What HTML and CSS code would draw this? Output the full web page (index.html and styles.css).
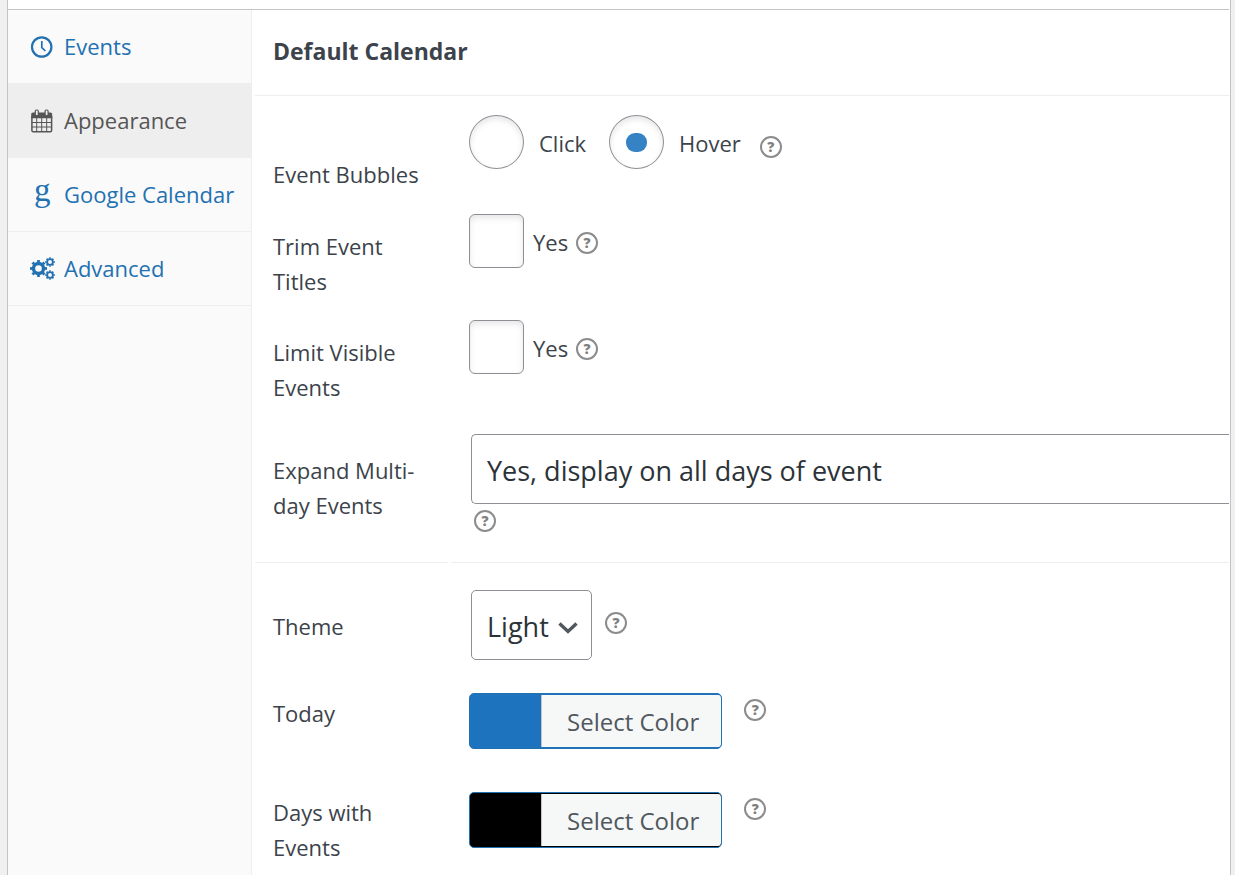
FILE: index.html
```
<!DOCTYPE html>
<html lang="en">
<head>
<meta charset="utf-8">
<title>Default Calendar</title>
<link rel="stylesheet" href="styles.css">
</head>
<body>
<div class="panel">
  <div class="panel-body">
    <nav class="tabs">
      <a class="tab" href="#events">
        <svg class="tab-icon" viewBox="0 0 28 28" aria-hidden="true"><circle cx="11.700" cy="14" r="9.700" fill="none" stroke="currentColor" stroke-width="2.200"/><path d="M11.800 8v6.600l3.600 3.400" fill="none" stroke="currentColor" stroke-width="1.700"/></svg>
        <span>Events</span>
      </a>
      <a class="tab tab-active" href="#appearance">
        <svg class="tab-icon" viewBox="0 0 28 28" aria-hidden="true"><path d="M3 5.500h17.500q1.700 0 1.700 1.500v4.300H1.200V7q0-1.500 1.800-1.500z" fill="currentColor"/><path d="M1.900 9v14.400q0 1.400 1.400 1.400h16.900q1.400 0 1.400-1.400V9" fill="none" stroke="currentColor" stroke-width="1.500"/><path d="M6.700 10v14.500M11.700 10v14.500M16.700 10v14.500M2 15.500h19.500M2 20h19.500" fill="none" stroke="currentColor" stroke-width="1"/><rect x="5.300" y="3" width="3" height="5.600" rx="1.200" fill="#eee" stroke="currentColor" stroke-width="1.200"/><rect x="15.100" y="3" width="3" height="5.600" rx="1.200" fill="#eee" stroke="currentColor" stroke-width="1.200"/></svg>
        <span>Appearance</span>
      </a>
      <a class="tab" href="#google">
        <span class="tab-icon tab-letter" aria-hidden="true">g</span>
        <span>Google Calendar</span>
      </a>
      <a class="tab" href="#advanced">
        <svg class="tab-icon" viewBox="0 0 28 28" aria-hidden="true"><g fill="none" stroke="currentColor"><circle cx="8.500" cy="13.500" r="5" stroke-width="3.400"/><circle cx="8.500" cy="13.500" r="7.300" stroke-width="2.400" pathLength="16" stroke-dasharray="1 1" stroke-dashoffset=".5"/><circle cx="20" cy="7" r="2.900" stroke-width="1.900"/><circle cx="20" cy="7" r="4.100" stroke-width="1.500" pathLength="16" stroke-dasharray="1 1" stroke-dashoffset=".5"/><circle cx="20" cy="20" r="2.900" stroke-width="1.900"/><circle cx="20" cy="20" r="4.100" stroke-width="1.500" pathLength="16" stroke-dasharray="1 1" stroke-dashoffset=".5"/></g></svg>
        <span>Advanced</span>
      </a>
    </nav>
    <main class="settings">
      <h2 class="title">Default Calendar</h2>
      <div class="row row-radio" role="radiogroup" aria-labelledby="bubbles">
        <div class="name" id="bubbles">Event Bubbles</div>
        <div class="field">
          <label class="choice choice-radio"><input class="box radio" type="radio" name="bubbles"><span>Click</span></label>
          <label class="choice choice-radio"><input class="box radio" type="radio" name="bubbles" checked><span>Hover</span></label>
          <span class="help">?</span>
        </div>
      </div>
      <div class="row row-check">
        <div class="name" id="trim">Trim Event Titles</div>
        <div class="field">
          <label class="choice"><input class="box" type="checkbox" aria-describedby="trim"><span>Yes</span></label>
          <span class="help">?</span>
        </div>
      </div>
      <div class="row row-check">
        <div class="name" id="limit">Limit Visible Events</div>
        <div class="field">
          <label class="choice"><input class="box" type="checkbox" aria-describedby="limit"><span>Yes</span></label>
          <span class="help">?</span>
        </div>
      </div>
      <div class="row row-wide">
        <label class="name" for="expand">Expand Multi-day Events</label>
        <div class="field">
          <select class="select select-wide" id="expand"><option>Yes, display on all days of event</option></select>
          <span class="help">?</span>
        </div>
      </div>
      <div class="row row-select">
        <label class="name" for="theme">Theme</label>
        <div class="field">
          <div class="select-wrap">
            <select class="select" id="theme"><option>Light</option></select>
            <svg class="chevron" viewBox="0 0 20 12" aria-hidden="true"><path d="M1.500 1.500L10 9.500l8.500-8" fill="none" stroke="currentColor" stroke-width="3.400"/></svg>
          </div>
          <span class="help">?</span>
        </div>
      </div>
      <div class="row row-color">
        <div class="name">Today</div>
        <div class="field">
          <button class="color color-blue" type="button"><span>Select Color</span></button>
          <span class="help">?</span>
        </div>
      </div>
      <div class="row row-color">
        <div class="name">Days with Events</div>
        <div class="field">
          <button class="color color-black" type="button"><span>Select Color</span></button>
          <span class="help">?</span>
        </div>
      </div>
    </main>
  </div>
</div>
</body>
</html>
```
FILE: styles.css
```
* { box-sizing: border-box; }
body {
  margin: 0;
  background: #f0f0f0;
  color: #3c434a;
  font: 22px/35px "Open Sans", "Noto Sans", sans-serif;
}
.panel {
  display: flex;
  flex-direction: column;
  min-height: 100vh;
  margin: 0 4px 0 7px;
  padding: 9px 1px 0 0;
  border: solid #c3c4c7;
  border-width: 0 1px;
  background: #fff;
}
.panel-body {
  flex: 1;
  display: grid;
  grid-template-columns: 244px minmax(0, 1fr);
  border-top: 1px solid #c3c4c7;
}
.tabs {
  background: #fafafa;
  border-right: 1px solid #eee;
}
.tab {
  display: flex;
  align-items: center;
  gap: 6px;
  height: 74px;
  padding-left: 22px;
  border-bottom: 1px solid #eee;
  color: #2271b1;
  text-decoration: none;
  white-space: nowrap;
}
.tab-active { background: #eee; color: #555; }
.tab-icon { flex: none; width: 28px; height: 28px; }
.tab-letter {
  padding-left: 4px;
  font: 33px/18px "Liberation Serif", serif;
}
.settings { padding-left: 3px; }
.title {
  margin: 0;
  padding: 24px 18px 26px;
  border-bottom: 1px solid #eee;
  font-size: 23px;
  line-height: 35px;
}
.row {
  display: grid;
  grid-template-columns: 193px minmax(0, 1fr);
  column-gap: 3px;
}
.name { padding: 0 20px 0 18px; }
.field {
  display: flex;
  align-items: center;
  align-self: start;
  padding-left: 18px;
}
.row-radio .name { padding-top: 61px; }
.row-radio .field { padding-top: 19px; padding-bottom: 26px; }
.row-check .name { padding-top: 34px; padding-bottom: 2px; }
.row-check .field { padding-top: 19px; }
.row-wide .name, .row-select .name { padding-top: 46px; }
.row-wide .name, .row-wide .field { border-bottom: 1px solid #eee; }
.row-wide .field {
  flex-direction: column;
  align-items: start;
  gap: 6px;
  padding: 27px 0 30px 20px;
}
.row-select .field { padding: 27px 0 14px 20px; }
.row-color .name { padding-top: 22px; }
.row-color .field { align-items: start; padding-top: 19px; padding-bottom: 24px; }

.choice { display: flex; align-items: center; gap: 9px; }
.choice span { padding-top: 2px; }
.choice-radio { gap: 15px; margin-right: 23px; }
.box {
  appearance: none;
  width: 55px;
  height: 54px;
  margin: 0;
  border: 1px solid #8c8f94;
  border-radius: 6px;
  background: #fff;
  box-shadow: inset 0 3px 6px rgba(0, 0, 0, .1);
}
.radio { display: grid; place-items: center; border-radius: 50%; }
.radio:checked::before {
  content: "";
  width: 21px;
  height: 19px;
  border-radius: 9px;
  background: #3582c4;
}
.help {
  display: block;
  flex: none;
  width: 22px;
  height: 22px;
  border: 2px solid #8c8c8c;
  border-radius: 50%;
  color: #808080;
  font-size: 14px;
  font-weight: 800;
  line-height: 18px;
  text-align: center;
}
.row-radio .help { margin-top: 10px; margin-left: -4px; }
.row-check .help { margin-top: 4px; margin-left: 8px; }
.row-wide .help { margin-left: 3px; }
.row-select .help { margin-left: 13px; margin-bottom: 4px; }
.row-color .help { margin-top: 6px; margin-left: 22px; }

.select-wrap { position: relative; }
.select {
  display: block;
  appearance: none;
  height: 70px;
  padding: 4px 42px 0 15px;
  border: 1px solid #8c8f94;
  border-radius: 5px;
  background: #fff;
  color: #2c3338;
  font: 27px/40px "Open Sans", "Noto Sans", sans-serif;
}
.select-wide {
  width: 100%;
  border-right: 0;
  border-radius: 5px 0 0 5px;
}
.chevron {
  position: absolute;
  right: 14px;
  top: 32px;
  width: 20px;
  height: 12px;
  color: #50575e;
  pointer-events: none;
}
.color {
  height: 56px;
  padding: 1px 0 1px 71px;
  border: 1px solid #2271b1;
  border-radius: 5px;
  overflow: hidden;
  color: #50575e;
  font: 24px/52px "Open Sans", "Noto Sans", sans-serif;
}
.color span {
  display: block;
  height: 52px;
  padding: 1px 22px 0 25px;
  border-left: 1px solid #c3c4c7;
  border-radius: 0 3px 3px 0;
  background: #f6f7f7;
}
.color-blue { background: #1e73be; }
.color-black { background: #000; }
```
